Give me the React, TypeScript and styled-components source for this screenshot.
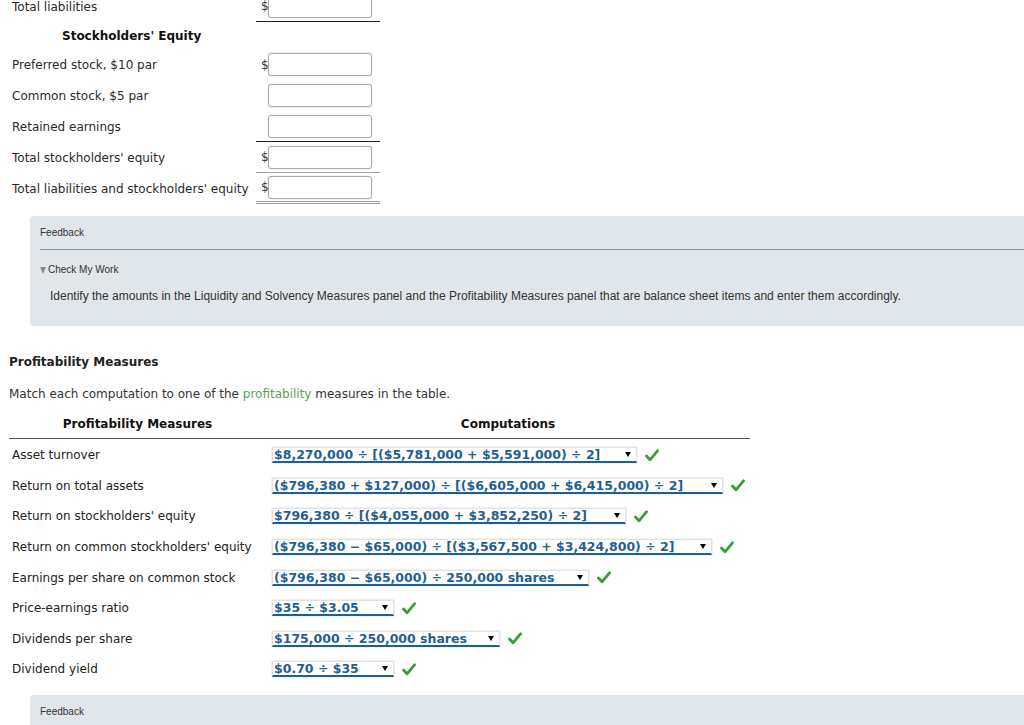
import styled, { createGlobalStyle } from "styled-components";

const GlobalStyle = createGlobalStyle`
    body {
        margin: 0;
        background: #ffffff;
        color: #222222;
        font-family: "DejaVu Sans", Verdana, sans-serif;
        font-size: 12px;
    }
    * { box-sizing: border-box; }
`;

const Page = styled.div`
    width: 1024px;
    height: 725px;
    overflow: hidden;
`;

const Sheet = styled.div`
    margin-top: -9px;
    display: flex;
    flex-direction: column;
`;

const SheetRow = styled.div`
    display: flex;
    height: 31px;
    align-items: center;
`;

const SheetLabel = styled.div`
    width: 256px;
    padding-left: 12px;
    white-space: nowrap;
    color: #2a2a2a;
`;

const Amount = styled.div<{ $rule?: "single" | "thin" | "double" }>`
    width: 124px;
    height: 100%;
    display: flex;
    align-items: center;
    padding-left: 5px;
    border-bottom: ${(p) =>
        p.$rule === "single"
            ? "1px solid #222"
            : p.$rule === "thin"
            ? "1px solid #a0a0a0"
            : p.$rule === "double"
            ? "3px double #a0a0a0"
            : "none"};
`;

const Dollar = styled.span`
    width: 7px;
    font-size: 12px;
    color: #333;
    overflow: visible;
`;

const AmountInput = styled.input`
    width: 104px;
    height: 23px;
    margin: 0;
    border: 1px solid #a9a9a9;
    border-radius: 3px;
    box-shadow: 0 0 2px rgba(0, 0, 0, 0.15);
    background: #fff;
    font: inherit;
`;

const SheetHeading = styled.div`
    height: 27px;
    display: flex;
    align-items: center;
    padding-left: 62px;
    font-weight: bold;
    color: #111;
`;

const FeedbackPanel = styled.div<{ $open?: boolean }>`
    margin: ${(p) => (p.$open ? "12px" : "10px")} 0 0 30px;
    background: #e0e6e9;
    border-radius: 4px 0 0 4px;
    padding: 11px 0 ${(p) => (p.$open ? "23px" : "10px")} 10px;
    font-family: "Liberation Sans", Arial, sans-serif;
    color: #333;
`;

const FeedbackTitle = styled.div`
    font-size: 10px;
    line-height: 12px;
`;

const Divider = styled.div`
    margin-top: 10px;
    height: 1px;
    background: #8e9498;
`;

const CheckMyWork = styled.div`
    margin-top: 14px;
    font-size: 10px;
    line-height: 12px;
    display: flex;
    align-items: center;
    gap: 2px;
    &::before {
        content: "";
        border-left: 3px solid transparent;
        border-right: 3px solid transparent;
        border-top: 7px solid #8a8a8a;
    }
`;

const Hint = styled.div`
    margin-top: 13px;
    padding-left: 10px;
    font-size: 12px;
    line-height: 14px;
    color: #333;
`;

const Section = styled.div`
    padding-left: 9px;
`;

const SectionTitle = styled.div`
    margin-top: 29px;
    font-weight: bold;
    line-height: 14px;
    color: #222;
`;

const Instruction = styled.div`
    margin-top: 18px;
    line-height: 14px;
    color: #333;
`;

const Green = styled.span`
    color: #55a257;
`;

const Table = styled.div`
    width: 741px;
    margin-top: 9px;
`;

const HeadRow = styled.div`
    display: grid;
    grid-template-columns: 257px 1fr;
    height: 29px;
    align-items: center;
    border-bottom: 1px solid #555;
    font-weight: bold;
    color: #111;
    text-align: center;
`;

const Body = styled.div`
    padding-top: 1px;
`;

const MeasureRow = styled.div`
    display: grid;
    grid-template-columns: 263px 1fr;
    height: 30.6px;
    align-items: center;
`;

const MeasureLabel = styled.div`
    padding-left: 3px;
    white-space: nowrap;
    color: #222;
`;

const Cell = styled.div`
    display: flex;
    align-items: center;
    gap: 8px;
`;

const SelectBox = styled.div<{ $w: number }>`
    width: ${(p) => p.$w}px;
    height: 16px;
    display: flex;
    align-items: center;
    padding-left: 1px;
    background: #fff;
    border: 1px solid #e2e2e2;
    border-bottom: 2px solid #1f5f93;
    box-shadow: 0 0 2px rgba(0, 0, 0, 0.18);
    color: #1f5f93;
    font-weight: bold;
    font-size: 12.5px;
    white-space: nowrap;
    overflow: hidden;
`;

const Caret = styled.span`
    margin-left: auto;
    margin-right: 5px;
    border-left: 3.5px solid transparent;
    border-right: 3.5px solid transparent;
    border-top: 5px solid #000;
`;

const Check = () => (
    <svg width="14" height="13" viewBox="0 0 14 13">
        <path d="M1.5 7 L5 10.8 L12.5 1.8" fill="none" stroke="#3d9c3a" strokeWidth="2.8" strokeLinecap="round" strokeLinejoin="round" />
    </svg>
);

const measures = [
    { label: "Asset turnover", value: "$8,270,000 ÷ [($5,781,000 + $5,591,000) ÷ 2]", width: 365 },
    { label: "Return on total assets", value: "($796,380 + $127,000) ÷ [($6,605,000 + $6,415,000) ÷ 2]", width: 451 },
    { label: "Return on stockholders' equity", value: "$796,380 ÷ [($4,055,000 + $3,852,250) ÷ 2]", width: 354 },
    { label: "Return on common stockholders' equity", value: "($796,380 − $65,000) ÷ [($3,567,500 + $3,424,800) ÷ 2]", width: 440 },
    { label: "Earnings per share on common stock", value: "($796,380 − $65,000) ÷ 250,000 shares", width: 317 },
    { label: "Price-earnings ratio", value: "$35 ÷ $3.05", width: 122 },
    { label: "Dividends per share", value: "$175,000 ÷ 250,000 shares", width: 228 },
    { label: "Dividend yield", value: "$0.70 ÷ $35", width: 122 },
];

export default function App() {
    return (
        <Page>
            <GlobalStyle />
            <Sheet>
                <SheetRow>
                    <SheetLabel>Total liabilities</SheetLabel>
                    <Amount $rule="single"><Dollar>$</Dollar><AmountInput /></Amount>
                </SheetRow>
                <SheetHeading>Stockholders' Equity</SheetHeading>
                <SheetRow>
                    <SheetLabel>Preferred stock, $10 par</SheetLabel>
                    <Amount><Dollar>$</Dollar><AmountInput /></Amount>
                </SheetRow>
                <SheetRow>
                    <SheetLabel>Common stock, $5 par</SheetLabel>
                    <Amount><Dollar /><AmountInput /></Amount>
                </SheetRow>
                <SheetRow>
                    <SheetLabel>Retained earnings</SheetLabel>
                    <Amount $rule="single"><Dollar /><AmountInput /></Amount>
                </SheetRow>
                <SheetRow>
                    <SheetLabel>Total stockholders' equity</SheetLabel>
                    <Amount $rule="thin"><Dollar>$</Dollar><AmountInput /></Amount>
                </SheetRow>
                <SheetRow>
                    <SheetLabel>Total liabilities and stockholders' equity</SheetLabel>
                    <Amount $rule="double"><Dollar>$</Dollar><AmountInput /></Amount>
                </SheetRow>
            </Sheet>

            <FeedbackPanel $open>
                <FeedbackTitle>Feedback</FeedbackTitle>
                <Divider />
                <CheckMyWork>Check My Work</CheckMyWork>
                <Hint>
                    Identify the amounts in the Liquidity and Solvency Measures panel and the Profitability Measures panel that are balance sheet items and enter them accordingly.
                </Hint>
            </FeedbackPanel>

            <Section>
                <SectionTitle>Profitability Measures</SectionTitle>
                <Instruction>
                    Match each computation to one of the <Green>profitability</Green> measures in the table.
                </Instruction>
                <Table>
                    <HeadRow>
                        <div>Profitability Measures</div>
                        <div>Computations</div>
                    </HeadRow>
                    <Body>
                        {measures.map((m) => (
                            <MeasureRow key={m.label}>
                                <MeasureLabel>{m.label}</MeasureLabel>
                                <Cell>
                                    <SelectBox $w={m.width}>
                                        {m.value}
                                        <Caret />
                                    </SelectBox>
                                    <Check />
                                </Cell>
                            </MeasureRow>
                        ))}
                    </Body>
                </Table>
            </Section>

            <FeedbackPanel>
                <FeedbackTitle>Feedback</FeedbackTitle>
            </FeedbackPanel>
        </Page>
    );
}
